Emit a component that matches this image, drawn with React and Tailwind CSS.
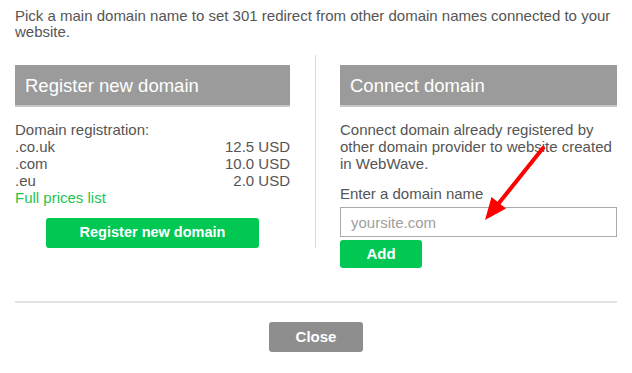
export default function App() {
  return (
    <div className="relative w-[632px] h-[373px] overflow-hidden bg-white font-['Liberation_Sans',Arial,sans-serif] text-[#555]">
      <p className="px-[15px] pt-[8px] text-[15px] leading-[16px]">
        Pick a main domain name to set 301 redirect from other domain names connected to your website.
      </p>
      <div className="mx-[15px] mt-[15px] flex items-start">
        <div className="w-[301px] pr-[25px] pt-[10px] border-r border-[#dcdcdc]">
          <div className="h-[42px] flex items-center pl-[10px] pt-[2px] bg-[#9b9b9b] border-b-2 border-[#c8c8c8] text-white text-[18.5px]">
            Register new domain
          </div>
          <div className="mt-[14px] text-[15px] leading-[17px]">
            <div>Domain registration:</div>
            <div className="flex justify-between"><span>.co.uk</span><span>12.5 USD</span></div>
            <div className="flex justify-between"><span>.com</span><span>10.0 USD</span></div>
            <div className="flex justify-between"><span>.eu</span><span>2.0 USD</span></div>
            <div className="text-[#1ec44f]">Full prices list</div>
          </div>
          <div className="mt-[12px] flex justify-center">
            <button className="w-[213px] h-[30px] rounded-[3px] bg-[#00c853] text-white font-bold text-[14.5px]">
              Register new domain
            </button>
          </div>
        </div>
        <div className="flex-1 pl-[24px] pt-[10px]">
          <div className="h-[42px] flex items-center pl-[10px] pt-[2px] bg-[#9b9b9b] border-b-2 border-[#c8c8c8] text-white text-[18.5px]">
            Connect domain
          </div>
          <div className="mt-[14px] text-[15px] leading-[17px]">
            Connect domain already registered by other domain provider to website created in WebWave.
          </div>
          <div className="mt-[13px] text-[15px] leading-[17px]">Enter a domain name</div>
          <input
            className="mt-[5px] block w-full h-[30px] border border-[#aaa] pl-[10px] text-[15px] outline-none placeholder:text-[#a0a0a0]"
            placeholder="yoursite.com"
          />
          <button className="mt-[3px] w-[82px] h-[28px] rounded-[3px] bg-[#00c853] text-white font-bold text-[15px]">
            Add
          </button>
        </div>
      </div>
      <div className="mx-[15px] mt-[33px] h-[2px] bg-[#e2e2e2]" />
      <div className="mt-[19px] flex justify-center">
        <button className="w-[94px] h-[30px] rounded-[3px] bg-[#8e8e8e] text-white font-bold text-[15px]">
          Close
        </button>
      </div>
      <svg className="absolute left-0 top-0 pointer-events-none" width="632" height="373">
        <line x1="543" y1="148" x2="499" y2="203" stroke="#ff0000" strokeWidth="4" strokeLinecap="round" />
        <polygon points="485,220 506,208.5 491.5,197" fill="#ff0000" />
      </svg>
    </div>
  );
}
